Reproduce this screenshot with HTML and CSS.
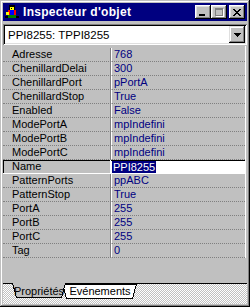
FILE: index.html
```html
<!DOCTYPE html>
<html>
<head>
<meta charset="utf-8">
<link rel="stylesheet" href="styles.css">
</head>
<body>
<div class="window">
  <div class="titlebar">
    <svg class="icon" width="16" height="16" viewBox="0 0 16 16" shape-rendering="crispEdges">
      <rect x="5" y="1" width="6" height="5" fill="#000"/>
      <rect x="6" y="3" width="4" height="3" fill="#ffff00"/>
      <rect x="7" y="4" width="1" height="1" fill="#000"/>
      <rect x="4" y="6" width="8" height="5" fill="#ff0000"/>
      <rect x="6" y="6" width="4" height="5" fill="#0000ff"/>
      <rect x="2" y="8" width="3" height="3" fill="#ffff00"/>
      <rect x="4" y="11" width="8" height="3" fill="#008000"/>
      <rect x="1" y="12" width="3" height="2" fill="#000"/>
      <rect x="12" y="12" width="3" height="2" fill="#000"/>
    </svg>
    <span class="title">Inspecteur d'objet</span>
    <div class="btns">
      <div class="btn"><svg width="8" height="7" viewBox="0 0 8 7" shape-rendering="crispEdges"><rect x="0" y="5" width="6" height="2" fill="#000"/></svg></div>
      <div class="btn"><svg width="9" height="9" viewBox="0 0 9 9" shape-rendering="crispEdges"><rect x="1" y="1" width="8" height="8" fill="#fff"/><rect x="0" y="0" width="8" height="8" fill="#808080"/><rect x="1" y="2" width="6" height="5" fill="#c0c0c0"/></svg></div>
      <div class="btn close"><svg width="8" height="7" viewBox="0 0 8 7" shape-rendering="crispEdges"><path d="M0 0h2v1h-2zM6 0h2v1h-2zM1 1h2v1h-2zM5 1h2v1h-2zM2 2h4v1h-4zM3 3h2v1h-2zM2 4h4v1h-4zM1 5h2v1h-2zM5 5h2v1h-2zM0 6h2v1h-2zM6 6h2v1h-2z" fill="#000"/></svg></div>
    </div>
  </div>
  <div class="combo">
    <span class="combo-text">PPI8255: TPPI8255</span>
    <div class="drop"><svg width="7" height="4" viewBox="0 0 7 4" shape-rendering="crispEdges"><path d="M0 0h7v1h-1v1h-1v1h-1v1h-1v-1h-1v-1h-1v-1h-1z" fill="#000"/></svg></div>
  </div>
  <div class="grid">
    <div class="row"><span class="name">Adresse</span><span class="val">768</span></div>
    <div class="row"><span class="name">ChenillardDelai</span><span class="val">300</span></div>
    <div class="row"><span class="name">ChenillardPort</span><span class="val">pPortA</span></div>
    <div class="row"><span class="name">ChenillardStop</span><span class="val">True</span></div>
    <div class="row"><span class="name">Enabled</span><span class="val">False</span></div>
    <div class="row"><span class="name">ModePortA</span><span class="val">mpIndefini</span></div>
    <div class="row"><span class="name">ModePortB</span><span class="val">mpIndefini</span></div>
    <div class="row"><span class="name">ModePortC</span><span class="val">mpIndefini</span></div>
    <div class="row selected"><span class="name">Name</span><span class="val"><span class="hl">PPI8255</span></span></div>
    <div class="row"><span class="name">PatternPorts</span><span class="val">ppABC</span></div>
    <div class="row"><span class="name">PatternStop</span><span class="val">True</span></div>
    <div class="row"><span class="name">PortA</span><span class="val">255</span></div>
    <div class="row"><span class="name">PortB</span><span class="val">255</span></div>
    <div class="row"><span class="name">PortC</span><span class="val">255</span></div>
    <div class="row"><span class="name">Tag</span><span class="val">0</span></div>
  </div>
  <div class="spacer"></div>
  <div class="tabstrip">
    <div class="tab active">
      <svg class="tabshape" width="54" height="16" viewBox="0 0 54 16" shape-rendering="crispEdges"><polygon points="0.5,0 4.5,14.5 49.5,14.5 53.5,0" fill="#c0c0c0" stroke="#000" stroke-width="1"/><rect x="1" y="0" width="52" height="1" fill="#c0c0c0"/></svg>
      <span class="tablabel">Propriétés</span>
    </div>
    <div class="tab other">
      <svg class="tabshape" width="76" height="16" viewBox="0 0 76 16" shape-rendering="crispEdges"><polygon points="0.5,0 4.5,14.5 70.5,14.5 74.5,0" fill="#fff" stroke="#000" stroke-width="1"/></svg>
      <span class="tablabel">Evénements</span>
    </div>
  </div>
</div>
</body>
</html>
```

FILE: styles.css
```css
* { box-sizing: border-box; margin: 0; padding: 0; }
html, body { width: 250px; height: 307px; overflow: hidden; background: #c0c0c0; }
body { font-family: "Liberation Sans", Arial, sans-serif; font-size: 11px; color: #000; }

.window {
  width: 250px; height: 307px;
  background: #c0c0c0;
  padding: 3px;
  display: flex; flex-direction: column;
  box-shadow: inset -1px -1px #000, inset 1px 1px #c0c0c0, inset -2px -2px #808080, inset 2px 2px #fff;
}

.titlebar {
  height: 18px; flex: none;
  background: #000080; color: #fff;
  display: flex; align-items: center;
  padding: 0 2px 0 1px;
}
.icon { width: 16px; height: 16px; margin-right: 3px; flex: none; }
.title { flex: 1; font-weight: bold; font-size: 12px; letter-spacing: 0.3px; white-space: nowrap; }
.btns { display: flex; }
.btn {
  width: 16px; height: 14px;
  background: #c0c0c0;
  display: flex; align-items: center; justify-content: center;
  box-shadow: inset -1px -1px #000, inset 1px 1px #fff, inset -2px -2px #808080, inset 2px 2px #dfdfdf;
}
.btn.close { margin-left: 2px; }

.combo {
  margin: 3px 0 1px 0; height: 21px; flex: none;
  background: #fff;
  display: flex; align-items: center;
  padding: 2px;
  box-shadow: inset 1px 1px #808080, inset -1px -1px #fff, inset 2px 2px #000, inset -2px -2px #dfdfdf;
}
.combo-text { flex: 1; padding-left: 3px; font-size: 11.5px; }
.drop {
  width: 16px; height: 17px;
  background: #c0c0c0;
  display: flex; align-items: center; justify-content: center;
  box-shadow: inset -1px -1px #000, inset 1px 1px #dfdfdf, inset -2px -2px #808080, inset 2px 2px #fff;
}

.grid { flex: none; padding-top: 2px; border-right: 1px solid #fff; margin-right: 1px; }
.row { display: flex; height: 14px; }
.name {
  width: 108px; flex: none;
  padding-left: 9px;
  line-height: 13px;
  border-bottom: 1px dotted #808080;
  border-right: 1px solid #808080;
}
.val {
  flex: 1;
  color: #000080;
  padding-left: 2px;
  line-height: 13px;
  border-bottom: 1px dotted #808080;
  border-left: 1px solid #fff;
}
.row.selected .name {
  border-bottom: 1px solid #fff;
  border-right: 1px solid #fff;
  box-shadow: inset 1px 1px #000;
}
.row.selected .val {
  background: #fff;
  border-left: none;
  border-bottom: 1px solid #fff;
  box-shadow: inset 0 1px #000;
  padding-left: 1px;
}
.hl { background: #000080; color: #fff; padding: 0 1px; display: inline-block; line-height: 12px; margin-top: 1px; }

.spacer { flex: 1; }

.tabstrip {
  height: 21px; flex: none;
  border-top: 1px solid #000;
  background: repeating-conic-gradient(#fff 0 25%, #c0c0c0 0 50%) 0 0 / 2px 2px;
  display: flex;
  padding-left: 9px;
}
.tab { position: relative; height: 16px; display: flex; justify-content: center; }
.tab.active { width: 54px; margin-top: -1px; z-index: 2; }
.tab.other { width: 76px; margin-left: -4px; z-index: 1; }
.tabshape { position: absolute; left: 0; top: 0; }
.tablabel { position: relative; line-height: 15px; }
.tab.active .tablabel { padding-top: 1px; }
```
